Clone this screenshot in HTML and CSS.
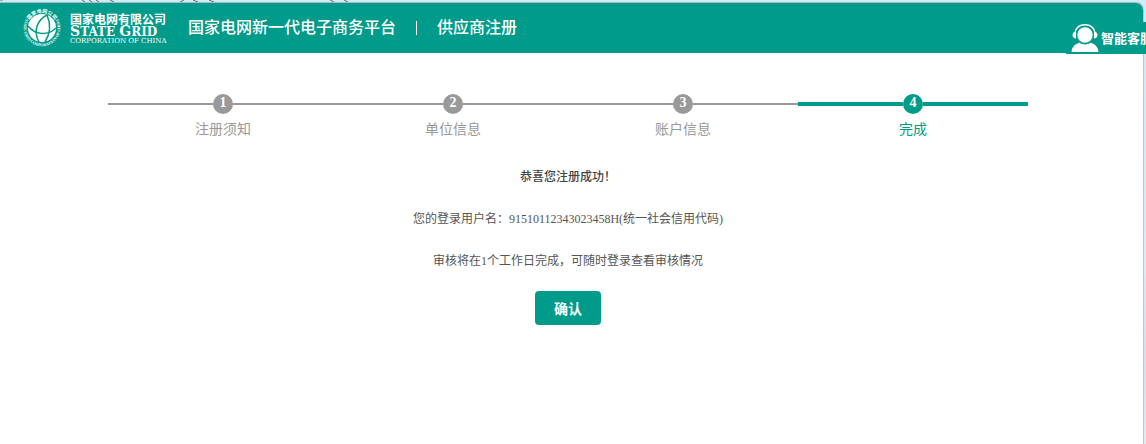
FILE: index.html
```
<!DOCTYPE html>
<html lang="zh-CN">
<head>
    <meta charset="UTF-8">
    <meta name="viewport" content="width=device-width, initial-scale=1.0">
    <title>供应商注册</title>
    <link rel="stylesheet" href="styles.css">
</head>
<body>
    <svg class="desktop-strip" width="360" height="2" viewBox="0 0 360 2" aria-hidden="true">
        <path d="M0 0h3M82 0l3 2M89 0l3 2M96 0l3 2M110 0l4 2M180 2l4-2M193 0l5 2M209 0l5 2M330 0l4 2M344 0l4 2" stroke="#75627d" fill="none"/>
    </svg>
    <div class="window">
        <header class="header">
            <div class="logo">
                <svg class="logo-mark" width="40" height="40" viewBox="0 0 40 40" aria-hidden="true">
                    <defs>
                        <path id="ringTop" d="M5 20a15 15 0 0 1 30 0"/>
                        <path id="ringBottom" d="M4 11A18.3 18.3 0 1 0 36 11"/>
                    </defs>
                    <text class="ring-cn" text-anchor="middle"><textPath href="#ringTop" startOffset="50%">国家电网公司</textPath></text>
                    <text class="ring-en" text-anchor="middle"><textPath href="#ringBottom" startOffset="50%">STATE GRID CORPORATION OF CHINA</textPath></text>
                    <circle cx="20" cy="20" r="14" fill="#fff"/>
                    <g fill="none" stroke="#009b8a" stroke-width="1.5">
                        <path d="M25 7C15 12 11 23 17 34"/>
                        <path d="M25 7C29 16 28 26 23 34"/>
                        <path d="M6 18C13 27 26 28 34 20"/>
                    </g>
                </svg>
                <div class="logo-text">
                    <span class="logo-cn">国家电网有限公司</span>
                    <span class="logo-en"><b>S</b>TATE <b>G</b>RID</span>
                    <span class="logo-sub">CORPORATION OF CHINA</span>
                </div>
            </div>
            <h1 class="title">国家电网新一代电子商务平台</h1>
            <span class="divider"></span>
            <span class="title">供应商注册</span>
        </header>

        <main class="main">
            <ol class="steps">
                <li class="step">
                    <div class="step-line"><span class="step-num">1</span></div>
                    <span class="step-label">注册须知</span>
                </li>
                <li class="step">
                    <div class="step-line"><span class="step-num">2</span></div>
                    <span class="step-label">单位信息</span>
                </li>
                <li class="step">
                    <div class="step-line"><span class="step-num">3</span></div>
                    <span class="step-label">账户信息</span>
                </li>
                <li class="step active" aria-current="step">
                    <div class="step-line"><span class="step-num">4</span></div>
                    <span class="step-label">完成</span>
                </li>
            </ol>

            <div class="result">
                <p class="result-title">恭喜您注册成功！</p>
                <p>您的登录用户名：91510112343023458H(统一社会信用代码)</p>
                <p>审核将在1个工作日完成，可随时登录查看审核情况</p>
                <button type="button" class="confirm-btn">确认</button>
            </div>
        </main>
    </div>

    <a class="service" href="#">
        <svg width="28" height="28" viewBox="0 0 28 28" aria-hidden="true">
            <circle cx="14" cy="11" r="7.7" fill="#fff"/>
            <path d="M4 9C5 3 9 .8 14 .8S23 3 24 9" fill="none" stroke="#fff" stroke-width="1.4"/>
            <path d="M5 7.5v7C3 14.5 1.5 13.2 1.5 11S3 7.5 5 7.5zM23 7.5v7c2 0 3.5-1.3 3.5-3.5S25 7.5 23 7.5z" fill="#fff"/>
            <path d="M.5 28C.8 23 4 20 8.5 18.8c3 2.2 8 2.2 11 0C24 20 27.2 23 27.5 28z" fill="#fff"/>
        </svg>
        <span>智能客服</span>
    </a>
</body>
</html>
```

FILE: styles.css
```
* {
    box-sizing: border-box;
}

body {
    margin: 0;
    min-height: 100vh;
    display: flex;
    flex-direction: column;
    padding-right: 2px;
    background: linear-gradient(#cfeaf8 0%, #d9ecf6 60%, #dcdcec 80%, #e6eaee 100%);
    font-family: "Liberation Serif", "Noto Sans CJK SC", serif;
    color: #555;
}

.desktop-strip {
    display: block;
}

.window {
    flex: 1;
    background: #fff;
    border-top: 1px solid #a9b8b8;
    border-right: 1px solid #bcc5c9;
    border-top-right-radius: 8px;
    overflow: hidden;
}

.header {
    display: flex;
    align-items: center;
    height: 50px;
    padding: 0 22px;
    background: #009b8a;
    color: #fff;
}

.logo {
    display: flex;
    align-items: center;
    gap: 8px;
    margin-right: 24px;
}

.ring-cn,
.ring-en {
    fill: #fff;
    font-weight: bold;
}

.ring-cn {
    font-family: "Noto Sans CJK SC", sans-serif;
    font-size: 5px;
}

.ring-en {
    font-family: "Liberation Serif", serif;
    font-size: 4px;
}

.logo-text {
    display: flex;
    flex-direction: column;
    width: 94px;
    white-space: nowrap;
}

.logo-cn {
    font: bold 12px/13px "Noto Sans CJK SC", sans-serif;
}

.logo-en {
    font: bold 12px/12px "DejaVu Serif", serif;
}

.logo-en b {
    font-size: 14px;
    line-height: 12px;
}

.logo-sub {
    font: 7px/7px "DejaVu Serif", serif;
}

.title {
    margin: 0;
    padding-bottom: 4px;
    font: 500 16px/24px "Noto Sans CJK SC", sans-serif;
}

.divider {
    width: 1px;
    height: 14px;
    margin: 0 20px;
    background: #fff;
}

.main {
    padding: 41px 7px 24px 0;
}

.steps {
    display: flex;
    max-width: 920px;
    margin: 0 auto;
    padding: 0;
    list-style: none;
}

.step {
    flex: 1;
    color: #999;
    text-align: center;
}

.step-line {
    display: flex;
    align-items: center;
}

.step-line::before,
.step-line::after {
    content: "";
    flex: 1;
    height: 2px;
    background: #999;
}

.step-num {
    width: 20px;
    height: 20px;
    border-radius: 50%;
    background: #999;
    color: #fff;
    font-size: 14px;
    font-weight: bold;
    line-height: 18px;
}

.step-label {
    display: block;
    margin-top: 6px;
    font-size: 14px;
    line-height: 20px;
}

.step.active {
    color: #009b8a;
}

.step.active .step-num,
.step.active .step-line::before,
.step.active .step-line::after {
    background: #009b8a;
}

.step.active .step-line::before,
.step.active .step-line::after {
    height: 4px;
}

.result {
    margin-top: 27px;
    font-size: 12px;
    line-height: 20px;
    text-align: center;
}

.result p {
    margin: 0 0 22px;
}

.result .result-title {
    color: #444;
    font-weight: 500;
}

.result p:last-of-type {
    margin-bottom: 20px;
}

.confirm-btn {
    display: block;
    width: 66px;
    height: 34px;
    margin: 0 auto;
    padding: 0;
    border: none;
    border-radius: 4px;
    background: #009b8a;
    color: #fff;
    font: bold 14px "Noto Sans CJK SC", sans-serif;
    cursor: pointer;
}

/* customer service tab runs past the right edge */
.service {
    position: absolute;
    top: 22px;
    right: 0;
    display: flex;
    align-items: center;
    gap: 2px;
    width: 80px;
    height: 32px;
    padding-left: 5px;
    overflow: hidden;
    background: #009b8a;
    color: #fff;
    font: bold 13px/20px "Noto Sans CJK SC", sans-serif;
    text-decoration: none;
    white-space: nowrap;
}

.service svg {
    flex-shrink: 0;
}
```
